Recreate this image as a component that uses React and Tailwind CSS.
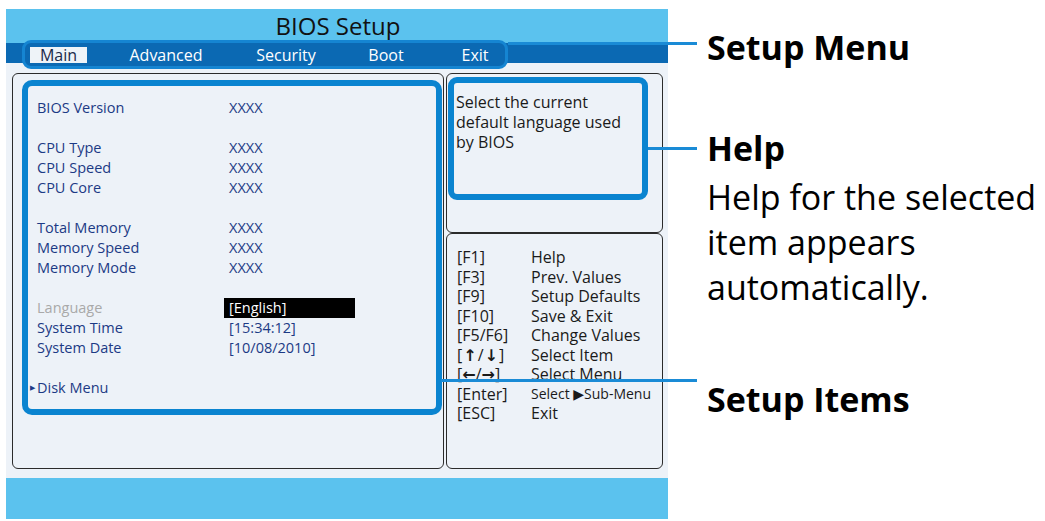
import React from "react";

const rows = [
  ["BIOS Version", "XXXX"],
  null,
  ["CPU Type", "XXXX"],
  ["CPU Speed", "XXXX"],
  ["CPU Core", "XXXX"],
  null,
  ["Total Memory", "XXXX"],
  ["Memory Speed", "XXXX"],
  ["Memory Mode", "XXXX"],
  null,
  ["Language", "[English]", "lang"],
  ["System Time", "[15:34:12]"],
  ["System Date", "[10/08/2010]"],
  null,
  ["Disk Menu", "", "disk"],
];

const keys = [
  ["[F1]", "Help"],
  ["[F3]", "Prev. Values"],
  ["[F9]", "Setup Defaults"],
  ["[F10]", "Save & Exit"],
  ["[F5/F6]", "Change Values"],
  ["ud", "Select Item"],
  ["lr", "Select Menu"],
  ["[Enter]", "sub"],
  ["[ESC]", "Exit"],
];

function KeyLabel({ k }) {
  if (k === "ud")
    return (
      <span>
        [<span className="font-bold font-['DejaVu_Sans',sans-serif] text-[16px] mx-[1px]">↑</span>/
        <span className="font-bold font-['DejaVu_Sans',sans-serif] text-[16px] mx-[1px]">↓</span>]
      </span>
    );
  if (k === "lr")
    return (
      <span>
        [<span className="font-bold font-['DejaVu_Sans',sans-serif] text-[16px]">←</span>/
        <span className="font-bold font-['DejaVu_Sans',sans-serif] text-[16px]">→</span>]
      </span>
    );
  return <span>{k}</span>;
}

export default function App() {
  return (
    <div className="relative w-[1045px] h-[521px] bg-white overflow-hidden font-['Open_Sans','DejaVu_Sans',sans-serif]">
      <div className="flex">
        {/* BIOS screen */}
        <div className="ml-[6px] mt-[9px] w-[662px] flex flex-col">
          <div className="h-[31px] bg-[#5bc2ee] flex items-center justify-center text-[24px] leading-none text-[#111] pt-[3px] pl-[2px]">
            BIOS Setup
          </div>
          <div className="h-[29px] flex bg-[linear-gradient(to_bottom,#5bc2ee_3px,#0b69b3_3px,#0b69b3_23px,#edf2f8_23px)]">
            <div className="ml-[16px] w-[486px] h-full rounded-[9px] border-[3px] border-[#1585d2] bg-[#0b69b3] flex items-start pt-[4px] text-[16px] leading-[16px] text-white">
              <span className="ml-[5px] w-[57px] h-[16px] bg-[#eef3f8] text-[#1b2a4a] text-center">Main</span>
              <span className="ml-[29px] w-[100px] text-center">Advanced</span>
              <span className="ml-[20px] w-[100px] text-center">Security</span>
              <span className="w-[100px] text-center">Boot</span>
              <span className="ml-[9px] w-[60px] text-center">Exit</span>
            </div>
          </div>
          <div className="bg-[#edf2f8] pt-[4px] pb-[9px] pl-[6px] pr-[5px] flex gap-[2px]">
            {/* left panel */}
            <div className="w-[432px] h-[396px] border border-[#2b2b2b] rounded-[6px] pl-[9px] pt-[6px]">
              <div className="w-[420px] h-[335px] border-[6px] border-[#0a84d0] rounded-[10px] pl-[9px] pt-[12px] text-[14.5px] leading-[20px] text-[#1c3a85]">
                {rows.map((r, i) =>
                  r === null ? (
                    <div key={i} className="h-[20px]" />
                  ) : (
                    <div key={i} className="flex h-[20px] items-center">
                      <span className={`w-[192px] relative ${r[2] === "lang" ? "text-[#a9a9a9]" : ""}`}>
                        {r[2] === "disk" && (
                          <span className="absolute left-[-7px] top-0 text-[7px] leading-[20px]">▶</span>
                        )}
                        {r[0]}
                      </span>
                      {r[2] === "lang" ? (
                        <span className="-ml-[5px] pl-[5px] w-[131px] h-[20px] bg-black text-white">{r[1]}</span>
                      ) : (
                        <span>{r[1]}</span>
                      )}
                    </div>
                  )
                )}
              </div>
            </div>
            {/* right panel */}
            <div className="w-[217px] h-[396px] flex flex-col">
              <div className="h-[160px] border border-[#2b2b2b] rounded-[6px] pl-[1px] pt-[3px]">
                <div className="w-[200px] h-[123px] border-[6px] border-[#0a84d0] rounded-[9px] pl-[2px] pt-[9px] text-[16px] leading-[20px] text-[#1a1a1a]">
                  Select the current
                  <br />
                  default language used
                  <br />
                  by BIOS
                </div>
              </div>
              <div className="flex-1 border border-[#2b2b2b] rounded-[6px] pl-[10px] pt-[14px] text-[16px] leading-[19.5px] text-[#1a1a1a]">
                {keys.map(([k, d], i) => (
                  <div key={i} className="flex h-[19.5px] items-center overflow-visible">
                    <span className="w-[74px] leading-[19.5px]">
                      <KeyLabel k={k} />
                    </span>
                    {d === "sub" ? (
                      <span className="text-[14px]">
                        Select <span className="text-[14px] font-['DejaVu_Sans',sans-serif]">▶</span>Sub-Menu
                      </span>
                    ) : (
                      <span>{d}</span>
                    )}
                  </div>
                ))}
              </div>
            </div>
          </div>
          <div className="h-[41px] bg-[#5bc2ee]" />
        </div>

        {/* labels */}
        <div className="ml-[39px] pt-[27px] flex flex-col text-black text-[34px]">
          <div className="font-bold leading-[40px] whitespace-nowrap">Setup Menu</div>
          <div className="font-bold leading-[40px] mt-[61px]">Help</div>
          <div className="leading-[45px] mt-[7px] whitespace-nowrap">
            Help for the selected
            <br />
            item appears
            <br />
            automatically.
          </div>
          <div className="font-bold leading-[40px] mt-[69px] whitespace-nowrap">Setup Items</div>
        </div>
      </div>

      {/* callout lines */}
      <div className="absolute left-[508px] top-[42px] w-[189px] h-[3px] bg-[#1a8bd6]" />
      <div className="absolute left-[648px] top-[147px] w-[49px] h-[3px] bg-[#1a8bd6]" />
      <div className="absolute left-[441px] top-[379px] w-[256px] h-[3px] bg-[#1a8bd6]" />
    </div>
  );
}
